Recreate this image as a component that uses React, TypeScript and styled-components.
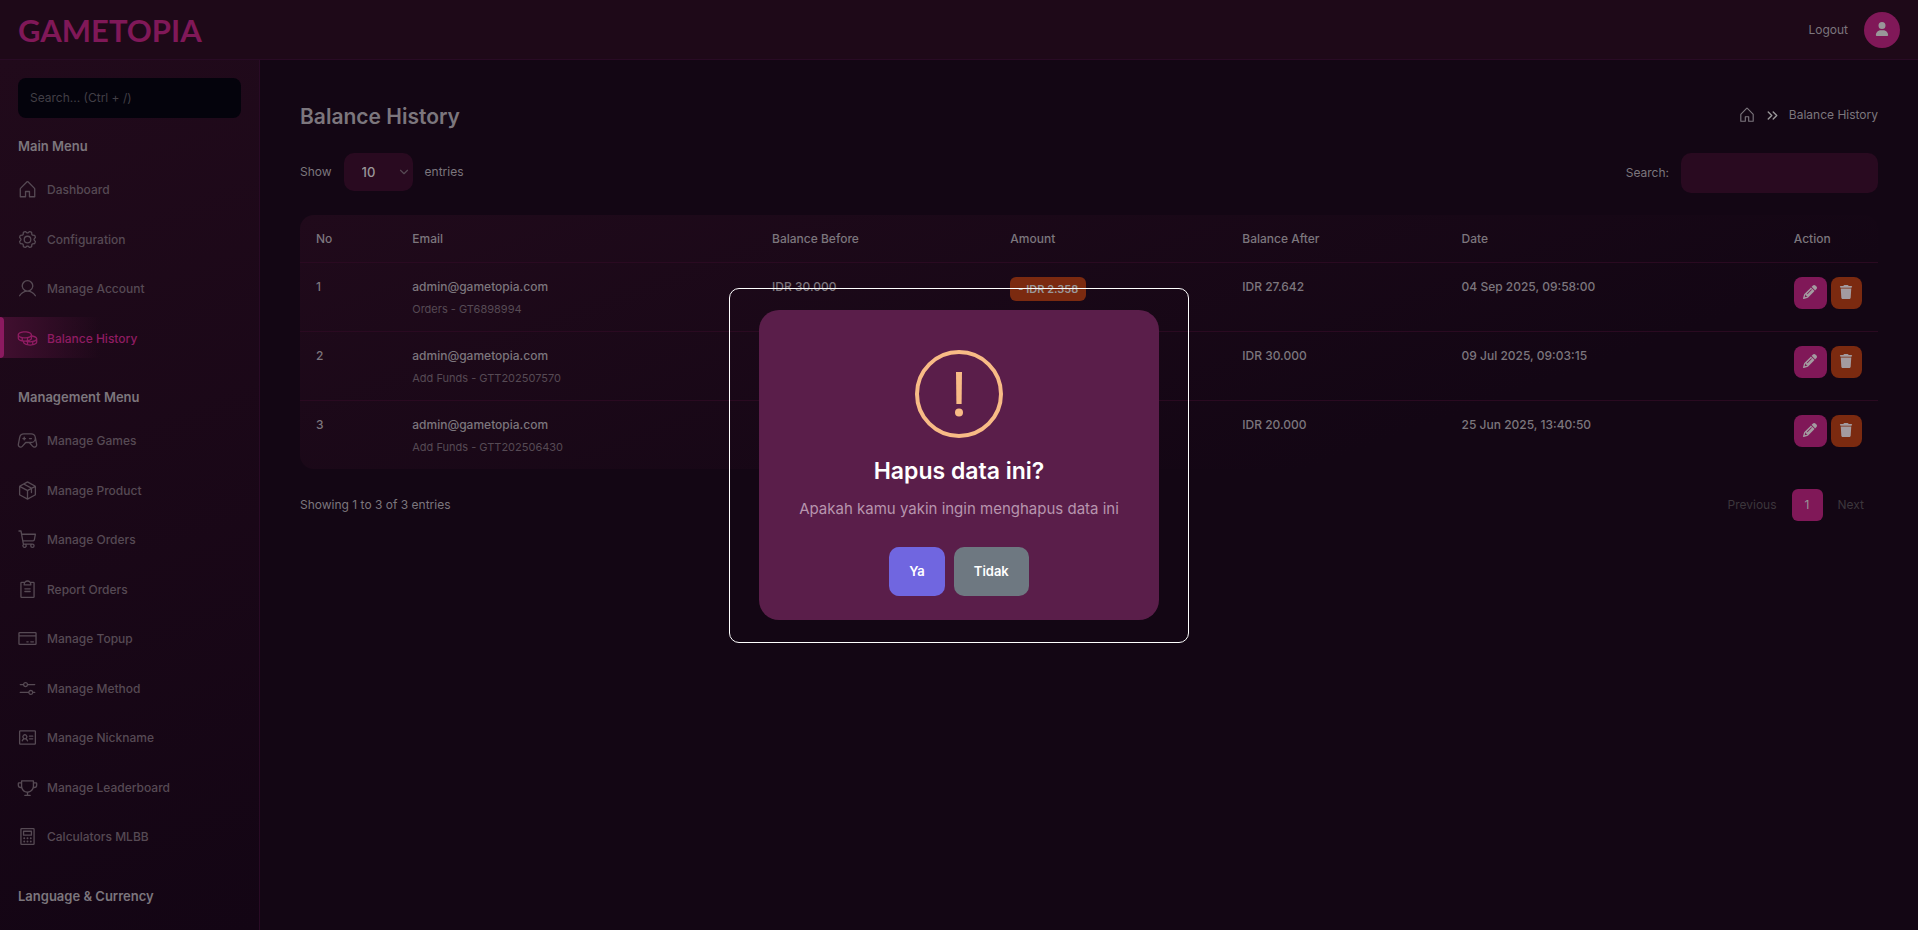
import React from 'react';
import styled, { createGlobalStyle, css } from 'styled-components';
import type { IconType } from 'react-icons';
import {
  PiCalculator, PiClipboardText, PiCoins, PiCreditCard, PiGameController, PiGear, PiGlobe,
  PiHouse, PiIdentificationCard, PiPackage, PiShoppingCart, PiSlidersHorizontal, PiTrophy, PiUser,
} from 'react-icons/pi';
import { FaPencil, FaTrash, FaUser } from 'react-icons/fa6';
import { ChevronDown, ChevronsRight } from 'lucide-react';

const color = {
  page: '#130614',
  bar: '#1e0918',
  line: '#290b25',
  rowLine: '#2a0a21',
  field: '#290a20',
  search: '#04030c',
  pink: '#801858',
  orange: '#7b2a10',
  text: '#7c767d',
  muted: '#564a54',
  faint: '#3c363c',
  bright: '#999799',
};

const GlobalStyle = createGlobalStyle`
  *, *::before, *::after { box-sizing: border-box; }
  body {
    margin: 0;
    background: ${color.page};
    color: ${color.text};
    font-family: Inter, "Liberation Sans", sans-serif;
    font-size: 12px;
    line-height: 20px;
  }
  button, input, select { font: inherit; color: inherit; border: 0; }
  a { color: inherit; text-decoration: none; }
  h1, h2, p, ul { margin: 0; padding: 0; }
`;

const Shell = styled.div`
  height: 100vh;
  display: flex;
  flex-direction: column;
  overflow: hidden;
`;

const TopBar = styled.header`
  flex: none;
  height: 60px;
  padding: 0 18px;
  display: flex;
  align-items: center;
  justify-content: space-between;
  background: ${color.bar};
  border-bottom: 1px solid ${color.line};
`;

const Brand = styled.a`
  font-family: Lato, Inter, sans-serif;
  font-size: 31px;
  font-weight: 700;
  line-height: 36px;
  color: ${color.pink};
`;

const Account = styled.div`
  display: flex;
  align-items: center;
  gap: 16px;
`;

const Avatar = styled.button`
  width: 36px;
  height: 36px;
  padding: 0 0 2px;
  display: grid;
  place-items: center;
  border-radius: 50%;
  background: ${color.pink};
  color: ${color.bright};
`;

const Body = styled.div`
  flex: 1;
  min-height: 0;
  display: flex;
`;

const Sidebar = styled.nav`
  flex: none;
  width: 260px;
  padding-top: 18px;
  overflow: hidden;
  background: linear-gradient(160deg, #210a1b, #130514);
  border-right: 1px solid ${color.line};
`;

const SideSearch = styled.input`
  display: block;
  width: 223px;
  height: 40px;
  margin: 0 18px 18px;
  padding: 0 12px 2px;
  border-radius: 8px;
  background: ${color.search};
  &::placeholder { color: #423f46; opacity: 1; }
`;

const GroupTitle = styled.h2`
  padding: 0 18px;
  font-size: 13px;
  font-weight: 600;
  line-height: 20px;
`;

const Menu = styled.ul`
  margin: 12px 0 29px;
  display: flex;
  flex-direction: column;
  gap: 8px;
  list-style: none;
`;

const MenuLink = styled.a<{ $active?: boolean }>`
  display: flex;
  align-items: center;
  gap: 9px;
  min-height: 41px;
  padding: 12px 17px 10px;
  font-weight: 500;
  line-height: 1.625;
  color: ${color.muted};
  svg { flex: none; margin: -2px 0; }
  ${(p) => p.$active && css`
    position: relative;
    color: #8f1c62;
    background: linear-gradient(90deg, #420f30, transparent 100px);
    &::before {
      content: '';
      position: absolute;
      inset: 0 auto 0 0;
      width: 4px;
      border-radius: 0 4px 4px 0;
      background: #8c1a60;
    }
  `}
`;

const Content = styled.main`
  flex: 1;
  min-width: 0;
  padding: 41px 40px 40px;
`;

const Row = styled.div`
  display: flex;
  align-items: center;
  justify-content: space-between;
`;

const PageTitle = styled.h1`
  font-size: 21px;
  font-weight: 600;
  line-height: 32px;
`;

const Crumbs = styled.nav`
  display: flex;
  align-items: center;
  gap: 8px;
  padding-bottom: 4px;
  a { display: flex; }
`;

const Controls = styled(Row)`
  margin-top: 20px;
  align-items: flex-start;
`;

const Field = styled.label`
  display: flex;
  align-items: center;
  gap: 12px;
`;

const SelectBox = styled.span`
  display: grid;
  align-items: center;
  svg { grid-area: 1 / 1; justify-self: end; margin-right: 2px; color: ${color.muted}; pointer-events: none; }
`;

const PageSize = styled.select`
  grid-area: 1 / 1;
  width: 69px;
  height: 38px;
  padding: 0 18px;
  appearance: none;
  border-radius: 10px;
  background: ${color.field};
  color: ${color.bright};
  font-size: 13px;
  font-weight: 500;
`;

const TableSearch = styled.input`
  width: 197px;
  height: 40px;
  padding: 0 12px;
  border-radius: 10px;
  background: ${color.field};
`;

const Table = styled.table`
  width: 100%;
  margin-top: 22px;
  table-layout: fixed;
  border-collapse: separate;
  border-spacing: 0;
  border-radius: 14px;
  background: linear-gradient(160deg, #200a1b, #130614 75%);
  font-weight: 500;
  th { height: 47px; padding: 0 16px; text-align: left; font-weight: 500; }
  td { height: 69px; padding: 14px 16px 0; vertical-align: top; border-top: 1px solid ${color.rowLine}; }
`;

const Note = styled.div`
  margin-top: 2px;
  font-size: 11px;
  font-weight: 400;
  color: ${color.muted};
`;

const Badge = styled.span`
  display: inline-block;
  padding: 2px 8px;
  border-radius: 6px;
  background: ${color.orange};
  color: ${color.bright};
  font-size: 11px;
  font-weight: 600;
`;

const Actions = styled.div`
  display: flex;
  gap: 4px;
`;

const IconButton = styled.button<{ $danger?: boolean }>`
  flex: none;
  width: ${(p) => (p.$danger ? 31 : 33)}px;
  height: 32px;
  padding: 0 0 2px;
  display: grid;
  place-items: center;
  border-radius: 8px;
  background: ${(p) => (p.$danger ? color.orange : color.pink)};
  color: #a39ba0;
`;

const Footer = styled(Row)`
  margin-top: 20px;
`;

const Pager = styled.nav`
  display: flex;
  align-items: center;
  gap: 15px;
  padding-right: 14px;
`;

const PageLink = styled.button<{ $current?: boolean }>`
  height: 32px;
  padding: 0;
  background: none;
  color: ${color.faint};
  ${(p) => p.$current && css`
    width: 31px;
    border-radius: 6px;
    background: ${color.pink};
    color: ${color.bright};
  `}
`;

const Backdrop = styled.div`
  position: fixed;
  inset: 0;
  display: grid;
  place-items: center;
`;

const FocusFrame = styled.div`
  padding: 21px 29px 22px;
  border: 1px solid #fff;
  border-radius: 10px;
`;

const Dialog = styled.section`
  width: 400px;
  padding: 40px 20px 24px;
  display: flex;
  flex-direction: column;
  align-items: center;
  border-radius: 20px;
  background: #5a1e4a;
  text-align: center;
`;

const DialogTitle = styled.h2`
  margin-top: 17px;
  font-size: 23px;
  font-weight: 600;
  line-height: 32px;
  color: #fff;
`;

const DialogText = styled.p`
  margin-top: 10px;
  font-size: 15px;
  line-height: 24px;
  color: #b795ae;
`;

const DialogActions = styled.div`
  margin-top: 26px;
  display: flex;
  gap: 9px;
`;

const DialogButton = styled.button<{ $tone: string }>`
  height: 49px;
  padding: 0 20px;
  border-radius: 10px;
  background: ${(p) => p.$tone};
  color: #fff;
  font-size: 13px;
  font-weight: 600;
`;

type Entry = { label: string; icon: IconType; active?: boolean };

const groups: { title: string; items: Entry[] }[] = [
  {
    title: 'Main Menu',
    items: [
      { label: 'Dashboard', icon: PiHouse },
      { label: 'Configuration', icon: PiGear },
      { label: 'Manage Account', icon: PiUser },
      { label: 'Balance History', icon: PiCoins, active: true },
    ],
  },
  {
    title: 'Management Menu',
    items: [
      { label: 'Manage Games', icon: PiGameController },
      { label: 'Manage Product', icon: PiPackage },
      { label: 'Manage Orders', icon: PiShoppingCart },
      { label: 'Report Orders', icon: PiClipboardText },
      { label: 'Manage Topup', icon: PiCreditCard },
      { label: 'Manage Method', icon: PiSlidersHorizontal },
      { label: 'Manage Nickname', icon: PiIdentificationCard },
      { label: 'Manage Leaderboard', icon: PiTrophy },
      { label: 'Calculators MLBB', icon: PiCalculator },
    ],
  },
  { title: 'Language & Currency', items: [{ label: '', icon: PiGlobe }] },
];

const columns: [string, string][] = [
  ['No', '6.1%'],
  ['Email', '22.8%'],
  ['Balance Before', '15.1%'],
  ['Amount', '14.7%'],
  ['Balance After', '13.9%'],
  ['Date', '21.05%'],
  ['Action', '6.35%'],
];

const records = [
  { note: 'Orders - GT6898994', before: 'IDR 30.000', amount: '- IDR 2.358', after: 'IDR 27.642', date: '04 Sep 2025, 09:58:00' },
  { note: 'Add Funds - GTT202507570', before: '', amount: '', after: 'IDR 30.000', date: '09 Jul 2025, 09:03:15' },
  { note: 'Add Funds - GTT202506430', before: '', amount: '', after: 'IDR 20.000', date: '25 Jun 2025, 13:40:50' },
];

export default function App() {
  return (
    <>
      <GlobalStyle />
      <Shell>
        <TopBar>
          <Brand href="#">GAMETOPIA</Brand>
          <Account>
            <a href="#logout">Logout</a>
            <Avatar aria-label="Account"><FaUser size={14} /></Avatar>
          </Account>
        </TopBar>
        <Body>
          <Sidebar>
            <SideSearch aria-label="Search menu" placeholder="Search... (Ctrl + /)" />
            {groups.map((group) => (
              <React.Fragment key={group.title}>
                <GroupTitle>{group.title}</GroupTitle>
                <Menu>
                  {group.items.map(({ label, icon: Icon, active }) => (
                    <li key={label}>
                      <MenuLink href="#" $active={active} aria-label={label || group.title}>
                        <Icon size={21} />
                        {label}
                      </MenuLink>
                    </li>
                  ))}
                </Menu>
              </React.Fragment>
            ))}
          </Sidebar>
          <Content>
            <Row>
              <PageTitle>Balance History</PageTitle>
              <Crumbs aria-label="Breadcrumb">
                <a href="#" aria-label="Home"><PiHouse size={18} /></a>
                <ChevronsRight size={17} strokeWidth={2} color={color.bright} />
                <span>Balance History</span>
              </Crumbs>
            </Row>
            <Controls>
              <Field>
                Show
                <SelectBox>
                  <PageSize defaultValue="10">
                    <option>10</option>
                    <option>25</option>
                    <option>50</option>
                  </PageSize>
                  <ChevronDown size={14} strokeWidth={2} />
                </SelectBox>
                entries
              </Field>
              <Field>
                Search:
                <TableSearch type="search" />
              </Field>
            </Controls>
            <Table>
              <colgroup>
                {columns.map(([name, width]) => <col key={name} style={{ width }} />)}
              </colgroup>
              <thead>
                <tr>{columns.map(([name]) => <th key={name} scope="col">{name}</th>)}</tr>
              </thead>
              <tbody>
                {records.map((r, i) => (
                  <tr key={r.note}>
                    <td>{i + 1}</td>
                    <td>
                      admin@gametopia.com
                      <Note>{r.note}</Note>
                    </td>
                    <td>{r.before}</td>
                    <td>{r.amount && <Badge>{r.amount}</Badge>}</td>
                    <td>{r.after}</td>
                    <td>{r.date}</td>
                    <td>
                      <Actions>
                        <IconButton aria-label="Edit"><FaPencil size={14} /></IconButton>
                        <IconButton $danger aria-label="Delete"><FaTrash size={14} /></IconButton>
                      </Actions>
                    </td>
                  </tr>
                ))}
              </tbody>
            </Table>
            <Footer>
              <span>Showing 1 to 3 of 3 entries</span>
              <Pager aria-label="Pages">
                <PageLink>Previous</PageLink>
                <PageLink $current>1</PageLink>
                <PageLink>Next</PageLink>
              </Pager>
            </Footer>
          </Content>
        </Body>
      </Shell>
      <Backdrop>
        <FocusFrame>
          <Dialog role="dialog" aria-modal="true" aria-labelledby="confirm-title">
            <svg width="88" height="88" viewBox="0 0 88 88" aria-hidden="true">
              <circle cx="44" cy="44" r="42" fill="none" stroke="#f8bb86" strokeWidth="4" />
              <path d="M41 22h6l-.4 32h-5.200z" fill="#f8bb86" />
              <circle cx="44" cy="62.500" r="4" fill="#f8bb86" />
            </svg>
            <DialogTitle id="confirm-title">Hapus data ini?</DialogTitle>
            <DialogText>Apakah kamu yakin ingin menghapus data ini</DialogText>
            <DialogActions>
              <DialogButton $tone="#7066e0">Ya</DialogButton>
              <DialogButton $tone="#6e7881">Tidak</DialogButton>
            </DialogActions>
          </Dialog>
        </FocusFrame>
      </Backdrop>
    </>
  );
}
